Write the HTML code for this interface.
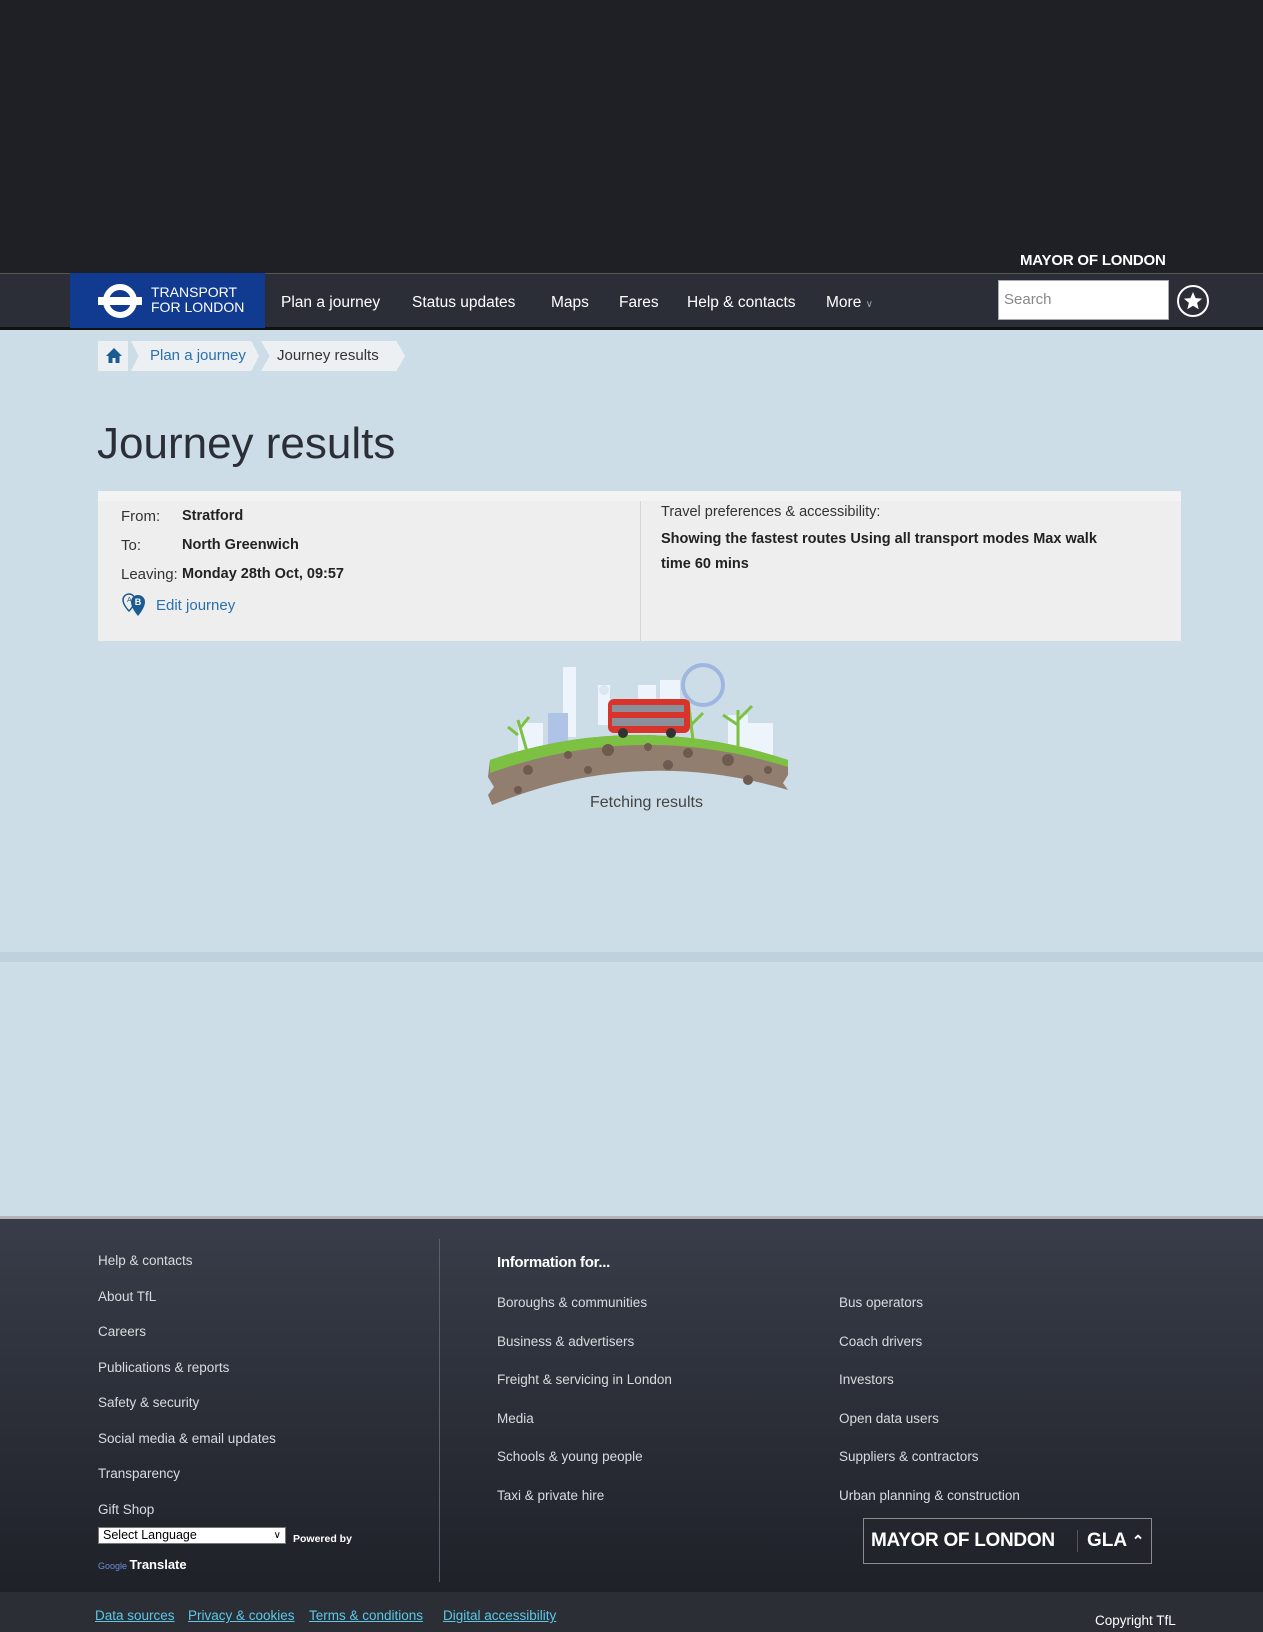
<!DOCTYPE html>
<html><head><meta charset="utf-8"><style>
*{margin:0;padding:0;box-sizing:border-box}
body{width:1263px;height:1624px;position:relative;background:#ccdde7;font-family:"Liberation Sans",sans-serif;overflow:hidden}
.a{position:absolute;white-space:nowrap}
.nav{color:#fff;font-size:15.5px;top:294px}
.fl{color:#d8dbe0;font-size:13.5px}
.bl{color:#5bc8e6;font-size:13.5px;text-decoration:underline;top:1608px}
</style></head><body>
<div class="a" style="left:0;top:0;width:1263px;height:273px;background:#1f2026"></div>
<div class="a" style="left:1020px;top:252px;color:#fff;font-weight:bold;font-size:15px;letter-spacing:-0.2px">MAYOR OF LONDON</div>
<div class="a" style="left:0;top:273px;width:1263px;height:57px;background:#2b2e37;border-top:1px solid #555;border-bottom:3px solid #111"></div>
<div class="a" style="left:70px;top:273px;width:195px;height:55px;background:#113a91"></div>
<svg class="a" style="left:98px;top:284px" width="44" height="34" viewBox="0 0 44 34"><circle cx="22" cy="17" r="14" fill="none" stroke="#fff" stroke-width="6"/><rect x="0" y="13" width="44" height="8" fill="#fff"/></svg>
<div class="a" style="left:151px;top:285px;color:#fff;font-size:14px;line-height:15px">TRANSPORT<br>FOR LONDON</div>
<div class="a nav" style="left:281px">Plan a journey</div>
<div class="a nav" style="left:412px">Status updates</div>
<div class="a nav" style="left:551px">Maps</div>
<div class="a nav" style="left:619px">Fares</div>
<div class="a nav" style="left:687px">Help &amp; contacts</div>
<div class="a nav" style="left:826px">More <span style="font-size:10px;color:#8ab">&#8744;</span></div>
<div class="a" style="left:998px;top:280px;width:171px;height:40px;background:#fff;border:1px solid #aaa"></div>
<div class="a" style="left:1004px;top:291px;color:#888;font-size:15px">Search</div>
<svg class="a" style="left:1176px;top:284px" width="34" height="34" viewBox="0 0 34 34"><circle cx="17" cy="17" r="15" fill="none" stroke="#fff" stroke-width="2"/><path d="M17 8l2.6 6.1 6.5.5-5 4.3 1.6 6.4L17 21.8l-5.7 3.5 1.6-6.4-5-4.3 6.5-.5z" fill="#fff"/></svg>
<div class="a" style="left:98px;top:341px;width:30px;height:30px;background:#ecf0f3"></div>
<svg class="a" style="left:105px;top:347px" width="18" height="17" viewBox="0 0 18 17"><path d="M9 1L1 9h2.5v7h4v-5h3v5h4V9H17z" fill="#1c5a92"/></svg>
<div class="a" style="left:131px;top:341px;width:128px;height:30px;background:#ecf0f3;clip-path:polygon(0 0,94% 0,100% 50%,94% 100%,0 100%,6% 50%)"></div>
<div class="a" style="left:150px;top:347px;color:#2a70b0;font-size:15px">Plan a journey</div>
<div class="a" style="left:261px;top:341px;width:144px;height:30px;background:#ecf0f3;clip-path:polygon(0 0,94% 0,100% 50%,94% 100%,0 100%,6% 50%)"></div>
<div class="a" style="left:277px;top:347px;color:#333;font-size:15px">Journey results</div>
<div class="a" style="left:97px;top:419px;color:#2b2e36;font-size:44px">Journey results</div>
<div class="a" style="left:98px;top:491px;width:1083px;height:150px;background:#eeeeee;border-top:10px solid #f3f3f3"></div>
<div class="a" style="left:640px;top:501px;width:1px;height:140px;background:#d6d6d6"></div>
<div class="a" style="left:121px;top:502px;font-size:15px;color:#333;line-height:29px">From:<br>To:<br>Leaving:</div>
<div class="a" style="left:182px;top:502px;font-size:14.5px;color:#222;font-weight:bold;line-height:29px">Stratford<br>North Greenwich<br>Monday 28th Oct, 09:57</div>
<svg class="a" style="left:122px;top:593px" width="26" height="26" viewBox="0 0 26 26"><path d="M7 1a6 6 0 0 0-6 6c0 5 6 11 6 11s6-6 6-11a6 6 0 0 0-6-6z" fill="none" stroke="#1c5a92" stroke-width="1.5"/><path d="M16 2a7 7 0 0 0-7 7c0 6 7 14 7 14s7-8 7-14a7 7 0 0 0-7-7z" fill="#1c5a92"/><text x="16" y="12" font-size="9" fill="#fff" text-anchor="middle" font-family="Liberation Sans" font-weight="bold">B</text><text x="5" y="9" font-size="7" fill="#1c5a92" font-family="Liberation Sans">A</text></svg>
<div class="a" style="left:156px;top:597px;font-size:15px;color:#2a70b0">Edit journey</div>
<div class="a" style="left:661px;top:504px;font-size:14.5px;color:#333">Travel preferences &amp; accessibility:</div>
<div class="a" style="left:661px;top:527px;font-size:14.5px;color:#222;font-weight:bold;line-height:25px">Showing the fastest routes Using all transport modes Max walk<br>time 60 mins</div>
<svg class="a" style="left:488px;top:655px" width="305" height="155" viewBox="0 0 305 155">
<rect x="75" y="12" width="13" height="70" fill="#eef4fb"/><rect x="110" y="30" width="12" height="40" fill="#eef4fb"/><circle cx="116" cy="35" r="5" fill="#dbe6f0"/>
<rect x="30" y="68" width="25" height="40" fill="#eef4fb"/><rect x="60" y="58" width="20" height="50" fill="#aec3e6"/>
<rect x="150" y="30" width="18" height="40" fill="#eef4fb"/><rect x="172" y="25" width="20" height="40" fill="#eef4fb"/>
<circle cx="215" cy="30" r="20" fill="none" stroke="#9fb6e0" stroke-width="4"/>
<rect x="240" y="60" width="20" height="40" fill="#eef4fb"/><rect x="260" y="68" width="25" height="40" fill="#eef4fb"/>
<path d="M2 105 Q150 55 300 105 L300 120 L295 128 L300 135 Q150 90 4 150 L0 140 L6 132 L0 122z" fill="#927e6f"/>
<path d="M2 105 Q150 55 300 105 L300 112 Q150 65 2 118z" fill="#7cc142"/>
<g fill="#6e5a4e"><circle cx="40" cy="115" r="5"/><circle cx="80" cy="100" r="4"/><circle cx="120" cy="95" r="6"/><circle cx="160" cy="92" r="4"/><circle cx="200" cy="98" r="5"/><circle cx="240" cy="105" r="6"/><circle cx="280" cy="115" r="4"/><circle cx="30" cy="135" r="4"/><circle cx="100" cy="115" r="4"/><circle cx="180" cy="110" r="5"/><circle cx="260" cy="125" r="5"/></g>
<path d="M40 100l-10-35M30 80l-10-8M33 72l8-10M205 85l-5-40M203 60l-12-10M203 70l12-12M250 95l0-40M250 70l-15-10M250 65l14-14" stroke="#7cc142" stroke-width="3"/>
<rect x="120" y="44" width="82" height="34" rx="6" fill="#d9342b"/><rect x="124" y="50" width="72" height="7" fill="#8b8f99"/><rect x="124" y="63" width="72" height="8" fill="#8b8f99"/>
<circle cx="135" cy="78" r="5" fill="#333"/><circle cx="183" cy="78" r="5" fill="#333"/>
</svg>
<div class="a" style="left:590px;top:794px;font-size:16px;color:#444">Fetching results</div>
<div class="a" style="left:0;top:952px;width:1263px;height:10px;background:#bdd2dd"></div>
<div class="a" style="left:0;top:1216px;width:1263px;height:3px;background:#b4b4b4"></div>
<div class="a" style="left:0;top:1219px;width:1263px;height:373px;background:linear-gradient(#383d49,#1f2128)"></div>
<div class="a" style="left:439px;top:1239px;width:1px;height:343px;background:#5a5e66"></div>
<div class="a fl" style="left:98px;top:1243px;line-height:35.5px">Help &amp; contacts<br>About TfL<br>Careers<br>Publications &amp; reports<br>Safety &amp; security<br>Social media &amp; email updates<br>Transparency<br>Gift Shop</div>
<div class="a" style="left:497px;top:1254px;color:#fff;font-weight:bold;font-size:15px;letter-spacing:-0.3px">Information for...</div>
<div class="a fl" style="left:497px;top:1284px;line-height:38.5px">Boroughs &amp; communities<br>Business &amp; advertisers<br>Freight &amp; servicing in London<br>Media<br>Schools &amp; young people<br>Taxi &amp; private hire</div>
<div class="a fl" style="left:839px;top:1284px;line-height:38.5px">Bus operators<br>Coach drivers<br>Investors<br>Open data users<br>Suppliers &amp; contractors<br>Urban planning &amp; construction</div>
<div class="a" style="left:98px;top:1527px;width:188px;height:17px;background:#fff;border:1px solid #777;font-size:12.5px;padding-left:4px;line-height:15px">Select Language<span style="position:absolute;right:4px;font-size:10px">&#8744;</span></div>
<div class="a" style="left:293px;top:1533px;color:#fff;font-size:10.5px;font-weight:bold">Powered by</div>
<div class="a" style="left:98px;top:1557px;font-size:9px;color:#6a8fd8">Google <span style="color:#fff;font-size:13px;font-weight:bold">Translate</span></div>
<div class="a" style="left:863px;top:1518px;width:289px;height:46px;border:1px solid #8a8c90"></div>
<div class="a" style="left:871px;top:1530px;color:#fff;font-weight:bold;font-size:19px;letter-spacing:-0.3px">MAYOR OF LONDON</div>
<div class="a" style="left:1077px;top:1530px;width:1px;height:22px;background:#555"></div>
<div class="a" style="left:1087px;top:1530px;color:#fff;font-weight:bold;font-size:19px">GLA <span style="font-size:15px">&#8963;</span></div>
<div class="a" style="left:0;top:1592px;width:1263px;height:40px;background:#2c2e36"></div>
<div class="a bl" style="left:95px">Data sources</div>
<div class="a bl" style="left:188px">Privacy &amp; cookies</div>
<div class="a bl" style="left:309px">Terms &amp; conditions</div>
<div class="a bl" style="left:443px">Digital accessibility</div>
<div class="a" style="left:1095px;top:1613px;color:#fff;font-size:13.5px">Copyright TfL</div>
</body></html>
